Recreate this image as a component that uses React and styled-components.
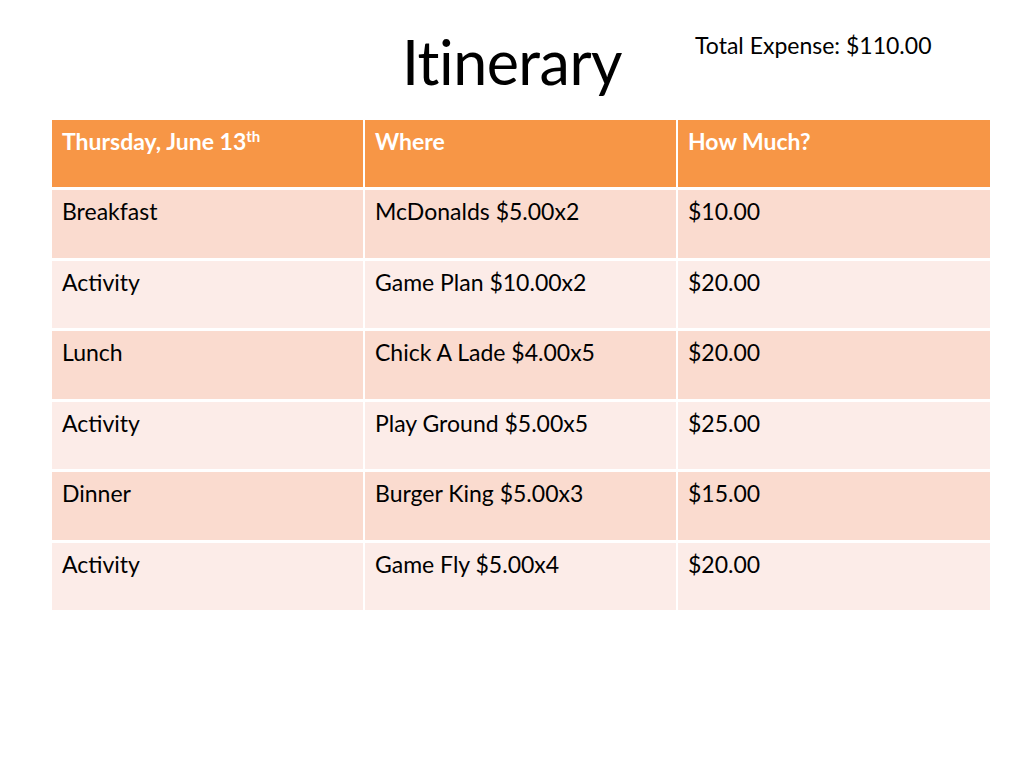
import React from 'react';
import styled, { createGlobalStyle } from 'styled-components';

const rows = [
  { what: 'Breakfast', where: 'McDonalds $5.00x2', cost: '$10.00' },
  { what: 'Activity', where: 'Game Plan $10.00x2', cost: '$20.00' },
  { what: 'Lunch', where: 'Chick A Lade $4.00x5', cost: '$20.00' },
  { what: 'Activity', where: 'Play Ground $5.00x5', cost: '$25.00' },
  { what: 'Dinner', where: 'Burger King $5.00x3', cost: '$15.00' },
  { what: 'Activity', where: 'Game Fly $5.00x4', cost: '$20.00' },
];

const GlobalStyle = createGlobalStyle`
  html, body {
    margin: 0;
    padding: 0;
    background: #ffffff;
  }
  body {
    font-family: Lato, "Open Sans", sans-serif;
    color: #000000;
  }
`;

const Slide = styled.div`
  width: 1024px;
  height: 768px;
`;

const Header = styled.header`
  display: grid;
  grid-template-columns: 1fr auto 1fr;
  height: 120px;
`;

const Title = styled.h1`
  grid-column: 2;
  margin: 0;
  padding-top: 31px;
  font-size: 61px;
  font-weight: 400;
  line-height: 1;
  letter-spacing: -0.5px;
`;

const Total = styled.div`
  grid-column: 3;
  padding: 34px 0 0 73px;
  font-size: 23px;
  line-height: 1;
  white-space: nowrap;
`;

const Table = styled.div`
  display: grid;
  margin: 0 34px 0 52px;
  grid-template-columns: 311px 311px 312px;
  grid-template-rows: 67px repeat(6, 67.5px);
  gap: 3px 2px;
  background: #ffffff;
`;

const Cell = styled.div`
  padding: 9px 10px;
  font-size: 23px;
  line-height: 1.1;
  background: ${(p) => (p.$head ? '#f79646' : p.$odd ? '#fadbcf' : '#fcece8')};
  color: ${(p) => (p.$head ? '#ffffff' : '#000000')};
  font-weight: ${(p) => (p.$head ? 700 : 400)};
`;

const Sup = styled.sup`
  font-size: 15px;
  line-height: 0;
  vertical-align: 8px;
`;

export default function App() {
  return (
    <>
      <GlobalStyle />
      <Slide>
        <Header>
          <Title>Itinerary</Title>
          <Total>Total Expense: $110.00</Total>
        </Header>
        <Table>
          <Cell $head>
            Thursday, June 13<Sup>th</Sup>
          </Cell>
          <Cell $head>Where</Cell>
          <Cell $head>How Much?</Cell>
          {rows.map((r, i) => (
            <React.Fragment key={i}>
              <Cell $odd={i % 2 === 0}>{r.what}</Cell>
              <Cell $odd={i % 2 === 0}>{r.where}</Cell>
              <Cell $odd={i % 2 === 0}>{r.cost}</Cell>
            </React.Fragment>
          ))}
        </Table>
      </Slide>
    </>
  );
}
